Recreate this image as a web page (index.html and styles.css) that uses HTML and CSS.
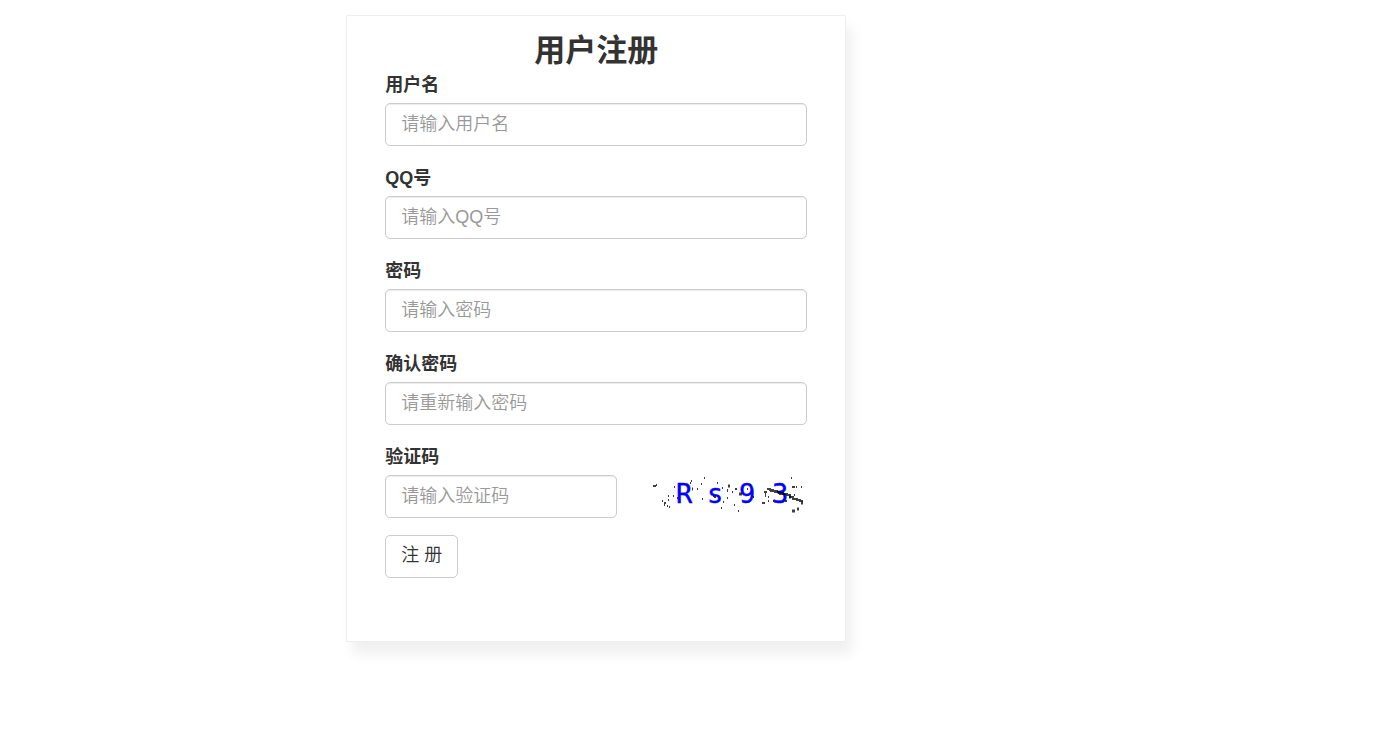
FILE: index.html
```html
<!DOCTYPE html>
<html lang="zh-CN">
<head>
    <meta charset="UTF-8">
    <meta name="viewport" content="width=device-width, initial-scale=1.0">
    <title>用户注册</title>
    <link rel="stylesheet" href="styles.css">
</head>
<body>

<div class="register">
    <h1>用户注册</h1>
    <form action="#" method="post">
        <div class="form-group">
            <label for="username">用户名</label>
            <input type="text" class="form-control" id="username" name="username" placeholder="请输入用户名">
        </div>
        <div class="form-group">
            <label for="qq">QQ号</label>
            <input type="text" class="form-control" id="qq" name="qq" placeholder="请输入QQ号">
        </div>
        <div class="form-group">
            <label for="password">密码</label>
            <input type="password" class="form-control" id="password" name="password" placeholder="请输入密码">
        </div>
        <div class="form-group">
            <label for="repassword">确认密码</label>
            <input type="password" class="form-control" id="repassword" name="repassword" placeholder="请重新输入密码">
        </div>
        <div class="form-group">
            <label for="code">验证码</label>
            <div class="code-row">
                <input type="text" class="form-control" id="code" name="code" placeholder="请输入验证码">
                <svg class="captcha" width="154" height="40" viewBox="0 0 154 40">
                    <g class="captcha-text">
                        <text x="23" y="26">R</text>
                        <text x="54" y="26">s</text>
                        <text x="86" y="26">9</text>
                        <text x="119" y="26">3</text>
                    </g>
                    <!-- 干扰点 -->
                    <path class="noise" d="M0 9h3M3 8h1M9 24h1M11 26h2M11 28h1M14 29h1M16 30h1M15 19h1M15 23h1M20 19h1M24 21h1M21 10h1M38 4h1M37 6h1M44 12h1M48 7h1M51 1h1M49 22h1M64 6h1M69 11h1M74 13h1M70 25h1M61 20h2M60 19h1M68 31h1M74 14h1M79 15h1M82 12h2M94 12h1M74 21h1M81 28h1M85 34h1M100 20h1M97 8h1M109 26h3M111 15h3M112 17h1M112 19h1M115 20h1M115 24h1M120 24h1M138 1h1M139 10h3M143 10h1M148 10h1M141 18h1M132 24h2"/>
                    <path class="noise thick" d="M75 9h2M39 12h1M86 17h3M139 34h3M144 32h2M148 26h2M136 20h2"/>
                    <path class="noise" d="M114 12h3v1h3v1h2v1h4v1h4v1h4v1h3v2h3v2h4v1h3v1h3M117 14h8M126 17h5"/>
                </svg>
            </div>
        </div>
        <button type="submit" class="btn">注 册</button>
    </form>
</div>

</body>
</html>
```
FILE: styles.css
```css
* {
    box-sizing: border-box;
}
body {
    margin: 0;
    font-family: "Liberation Sans", "Noto Sans CJK SC", sans-serif;
    font-size: 18px;
    line-height: 25px;
    color: #333;
    background-color: #fff;
}
.register {
    max-width: 500px;
    margin: 15px 0 40px calc(25% + 2px);
    padding: 18px 38px 63px;
    border: 1px solid #eee;
    box-shadow: 6px 12px 12px #f0f0f0;
}
h1 {
    margin: 0 0 5px;
    font-size: 31px;
    line-height: 34px;
    text-align: center;
}
.form-group {
    margin-bottom: 20px;
}
.form-group:last-of-type {
    margin-bottom: 17px;
}
label {
    display: block;
    margin-bottom: 5px;
    font-weight: bold;
}
.form-control {
    display: block;
    width: 100%;
    height: 43px;
    padding: 7px 15px;
    border: 1px solid #ccc;
    border-radius: 5px;
    background-color: #fff;
    box-shadow: inset 0 1px 1px rgba(0, 0, 0, 0.075);
    font-family: inherit;
    font-size: 18px;
    font-weight: 350;
    color: #555;
}
.form-control::placeholder {
    color: #999;
    opacity: 1;
}
.form-control:focus {
    border-color: #66afe9;
    outline: 0;
}

/* 验证码 */
.code-row {
    display: flex;
    justify-content: space-between;
    align-items: center;
}
.code-row .form-control {
    width: 55%;
}
.captcha {
    flex: none;
}
.captcha-text {
    font-family: "DejaVu Sans Mono", monospace;
    font-size: 27px;
    fill: #00f;
    stroke: #00f;
    stroke-width: 0.4px;
}
.noise {
    fill: none;
    stroke: #000;
    stroke-width: 2px;
    opacity: 0.75;
}
.thick {
    stroke-width: 3px;
}

.btn {
    display: block;
    height: 43px;
    padding: 6px 15px 8px;
    border: 1px solid #ccc;
    border-radius: 5px;
    background-color: #fff;
    font-family: inherit;
    font-size: 18px;
    font-weight: 350;
    line-height: 25px;
    color: #333;
    cursor: pointer;
}
.btn:hover {
    background-color: #e6e6e6;
}

@media (max-width: 700px) {
    .register {
        margin: 15px;
    }
}
```
